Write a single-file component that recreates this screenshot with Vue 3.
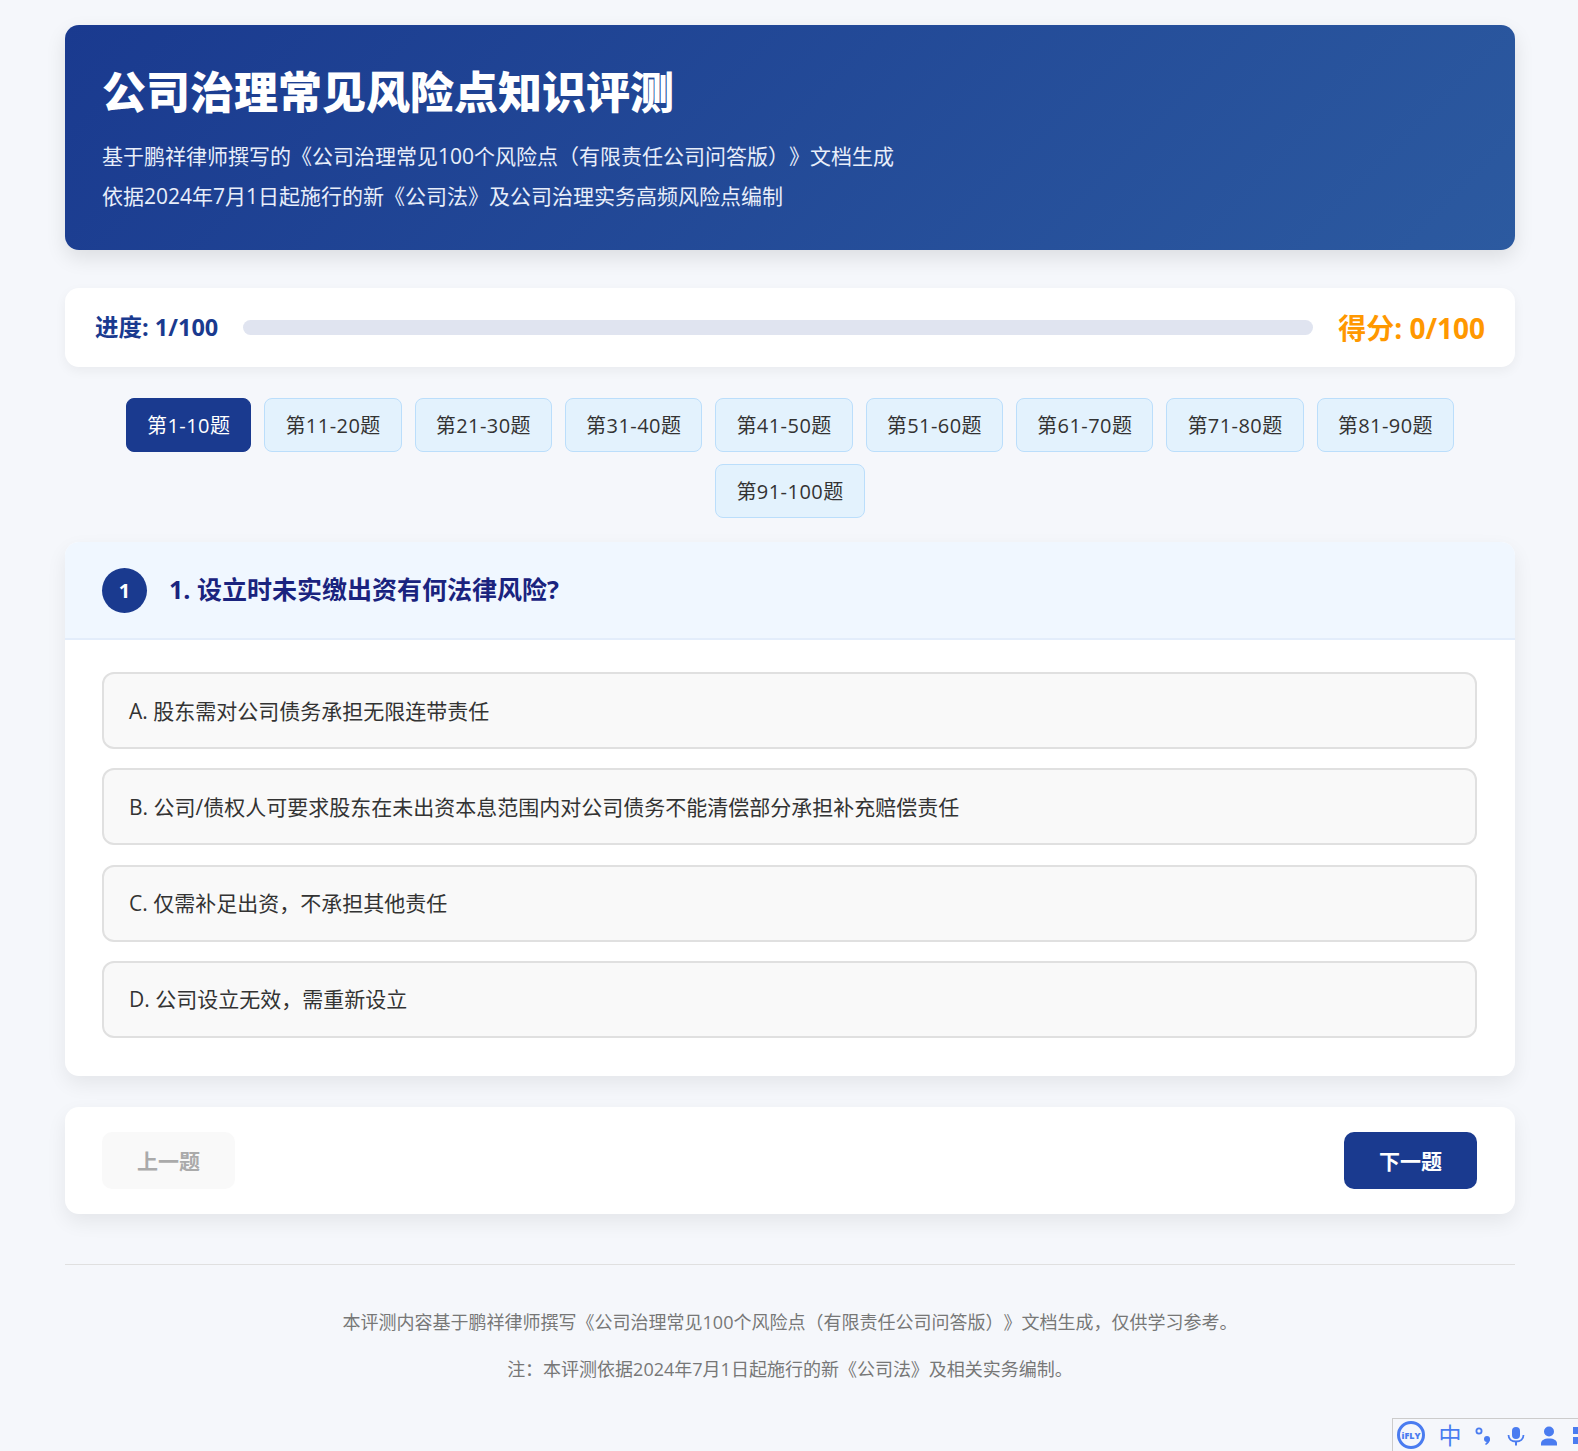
<template>
  <div class="page">
    <header class="banner">
      <h1>公司治理常见风险点知识评测</h1>
      <p>基于鹏祥律师撰写的《公司治理常见100个风险点（有限责任公司问答版）》文档生成</p>
      <p>依据2024年7月1日起施行的新《公司法》及公司治理实务高频风险点编制</p>
    </header>

    <section class="progress-card">
      <span class="progress-label">进度: {{ current }}/100</span>
      <div class="progress-track"></div>
      <span class="score">得分: {{ score }}/100</span>
    </section>

    <nav class="tabs">
      <button
        v-for="(tab, i) in tabs"
        :key="tab"
        class="tab"
        :class="{ active: i === activeTab }"
        @click="activeTab = i"
      >{{ tab }}</button>
    </nav>

    <section class="question-card">
      <div class="question-head">
        <span class="question-num">1</span>
        <h2>1. 设立时未实缴出资有何法律风险?</h2>
      </div>
      <div class="options">
        <div v-for="opt in options" :key="opt" class="option">{{ opt }}</div>
      </div>
    </section>

    <section class="nav-card">
      <button class="nav-btn" disabled>上一题</button>
      <button class="nav-btn next">下一题</button>
    </section>

    <footer class="foot">
      <p>本评测内容基于鹏祥律师撰写《公司治理常见100个风险点（有限责任公司问答版）》文档生成，仅供学习参考。</p>
      <p>注：本评测依据2024年7月1日起施行的新《公司法》及相关实务编制。</p>
    </footer>

    <!-- input method toolbar, cut off by the window edge -->
    <div class="ime">
      <span class="ime-logo">iFLY</span>
      <span class="ime-zh">中</span>
      <svg class="ime-icon" width="24" height="24" viewBox="0 0 24 24">
        <circle cx="8" cy="8" r="2.600" fill="none" stroke="#4a7cf0" stroke-width="1.800" />
        <circle cx="16" cy="16" r="3" fill="#4a7cf0" />
        <path d="M19 16c0 3-2 5-4 6l-1-1c1-1 2-2 2-3z" fill="#4a7cf0" />
      </svg>
      <svg class="ime-icon" width="24" height="24" viewBox="0 0 24 24">
        <rect x="8" y="4" width="8" height="12" rx="4" fill="#4a7cf0" />
        <path d="M4.500 12c0 4 3 6.500 7.500 6.500s7.500-2.500 7.500-6.500" fill="none" stroke="#4a7cf0" stroke-width="1.800" />
        <path d="M12 18v4.500" stroke="#4a7cf0" stroke-width="2" />
      </svg>
      <svg class="ime-icon" width="24" height="24" viewBox="0 0 24 24">
        <circle cx="12" cy="8.500" r="5" fill="#4a7cf0" />
        <path d="M4 22.500v-2c0-3 3-5 8-5s8 2 8 5v2z" fill="#4a7cf0" />
      </svg>
      <span class="ime-grid"><i></i><i></i><i></i><i></i></span>
    </div>
  </div>
</template>

<script setup>
import { ref } from 'vue'

const current = ref(1)
const score = ref(0)
const activeTab = ref(0)

const tabs = ['第1-10题', '第11-20题', '第21-30题', '第31-40题', '第41-50题', '第51-60题', '第61-70题', '第71-80题', '第81-90题', '第91-100题']

const options = [
  'A. 股东需对公司债务承担无限连带责任',
  'B. 公司/债权人可要求股东在未出资本息范围内对公司债务不能清偿部分承担补充赔偿责任',
  'C. 仅需补足出资，不承担其他责任',
  'D. 公司设立无效，需重新设立'
]
</script>

<style>
html, body {
  background: #f5f7fb;
}
</style>

<style scoped>
.page {
  box-sizing: border-box;
  width: 1450px;
  margin-left: 65px;
  padding-top: 25px;
  font-family: "Open Sans", "Noto Sans CJK SC", sans-serif;
  text-spacing-trim: space-all;
  color: #333;
}

.banner {
  height: 225px;
  box-sizing: border-box;
  padding: 36px 37px 0;
  border-radius: 14px;
  background: linear-gradient(135deg, #1a3a8f, #2c5aa0);
  box-shadow: 0 8px 20px rgba(0, 0, 0, 0.1);
  color: #fff;
}

.banner h1 {
  margin: 0 0 13px;
  font-size: 44px;
  line-height: 62px;
  font-weight: 800;
}

.banner p {
  margin: 0;
  font-size: 21px;
  line-height: 40px;
  color: #e8eefa;
}

.progress-card {
  display: flex;
  align-items: center;
  gap: 25px;
  height: 79px;
  box-sizing: border-box;
  margin-top: 38px;
  padding: 0 30px;
  border-radius: 14px;
  background: #fff;
  box-shadow: 0 4px 12px rgba(0, 0, 0, 0.05);
}

.progress-label {
  padding-bottom: 3px;
  font-size: 23.500px;
  font-weight: 700;
  color: #1a3a8f;
}

.progress-track {
  flex: 1;
  height: 15px;
  border-radius: 8px;
  background: #e0e4f0;
}

.score {
  padding-bottom: 2px;
  font-size: 28px;
  font-weight: 700;
  color: #ff9800;
}

.tabs {
  display: flex;
  flex-wrap: wrap;
  justify-content: center;
  gap: 12px 13px;
  margin-top: 31px;
}

.tab {
  height: 54px;
  padding: 0 20px 2px;
  border: 1px solid #bbdefb;
  border-radius: 8px;
  background: #e3f2fd;
  font-family: inherit;
  font-size: 20px;
  letter-spacing: 0.45px;
  color: #333;
  cursor: pointer;
}

.tab.active {
  border-color: #1a3a8f;
  background: #1a3a8f;
  color: #fff;
}

.question-card {
  margin-top: 24px;
  border-radius: 14px;
  background: #fff;
  box-shadow: 0 8px 20px rgba(0, 0, 0, 0.07);
  overflow: hidden;
}

.question-head {
  display: flex;
  align-items: center;
  gap: 22px;
  padding: 26px 37px 25px;
  border-bottom: 2px solid #e3edfb;
  background: #f0f7ff;
}

.question-num {
  display: flex;
  align-items: center;
  justify-content: center;
  width: 45px;
  height: 45px;
  border-radius: 50%;
  background: #1a3a8f;
  font-size: 20px;
  font-weight: 700;
  color: #fff;
}

.question-head h2 {
  margin: 0;
  padding-bottom: 6px;
  font-size: 25px;
  font-weight: 700;
  color: #1a237e;
}

.options {
  display: flex;
  flex-direction: column;
  gap: 19.250px;
  padding: 32px 38px 38px 37px;
}

.option {
  display: flex;
  align-items: center;
  height: 77px;
  box-sizing: border-box;
  padding: 0 25px 2px;
  border: 2px solid #e0e0e0;
  border-radius: 12px;
  background: #f9f9f9;
  font-size: 21px;
  cursor: pointer;
}

.nav-card {
  display: flex;
  justify-content: space-between;
  margin-top: 31px;
  padding: 25px 38px 25px 37px;
  border-radius: 14px;
  background: #fff;
  box-shadow: 0 8px 20px rgba(0, 0, 0, 0.07);
}

.nav-btn {
  width: 133px;
  height: 57px;
  border: none;
  border-radius: 10px;
  background: #1a3a8f;
  font-family: inherit;
  font-size: 21px;
  font-weight: 700;
  color: #fff;
  cursor: pointer;
}

.nav-btn:disabled {
  background: #f9f9f9;
  color: #aaa;
  cursor: default;
}

.foot {
  margin-top: 50px;
  padding-top: 41px;
  border-top: 1px solid #e0e0e0;
  text-align: center;
  font-size: 18px;
  color: #777;
}

.foot p {
  margin: 0 0 15px;
  line-height: 32px;
}

.ime {
  position: fixed;
  left: 1392px;
  right: 0;
  bottom: 0;
  top: 1418px;
  display: flex;
  align-items: center;
  gap: 9px;
  padding-left: 4px;
  border: 1px solid #ccc;
  border-right: none;
  border-bottom: none;
  background: #f5f7fb;
  overflow: hidden;
}

.ime-logo {
  display: flex;
  align-items: center;
  justify-content: center;
  flex: none;
  width: 22px;
  height: 22px;
  border: 3px solid #4a7cf0;
  border-radius: 50%;
  font-size: 9px;
  font-weight: 800;
  color: #4a7cf0;
}

.ime-zh {
  flex: none;
  width: 24px;
  margin-left: 4px;
  font-size: 23px;
  line-height: 24px;
  text-align: center;
  color: #4a7cf0;
}

.ime-icon {
  flex: none;
}

.ime-grid {
  display: grid;
  flex: none;
  grid-template-columns: 8px 8px;
  gap: 3px;
  margin-left: 3px;
}

.ime-grid i {
  height: 7px;
  background: #4a7cf0;
}
</style>
